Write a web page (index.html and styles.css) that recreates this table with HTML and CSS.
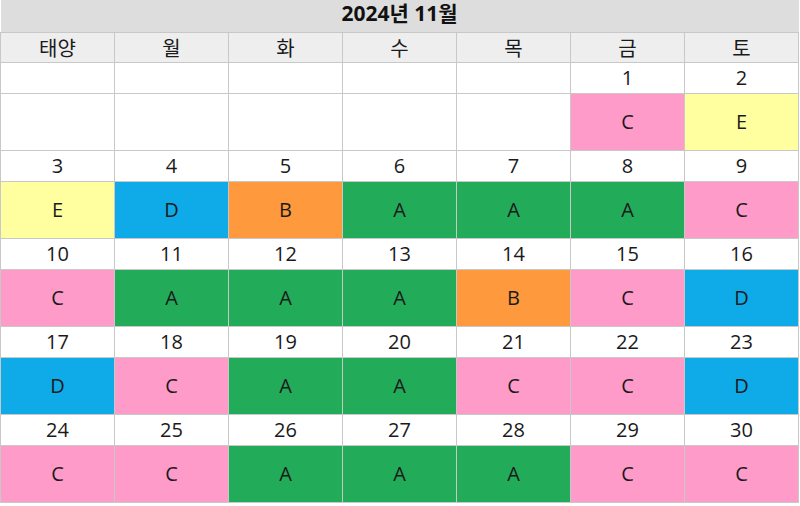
FILE: index.html
```html
<!DOCTYPE html>
<html>

<head>
    <meta charset="utf-8">
    <title>2024년 11월</title>
    <link rel="stylesheet" href="styles.css">
</head>

<body>

    <table class="calendar">
        <tr>
            <th colspan="7" class="title">2024년 11월</th>
        </tr>
        <tr class="week">
            <th>태양</th>
            <th>월</th>
            <th>화</th>
            <th>수</th>
            <th>목</th>
            <th>금</th>
            <th>토</th>
        </tr>

        <tr class="date">
            <td></td><td></td><td></td><td></td><td></td><td>1</td><td>2</td>
        </tr>
        <tr class="shift">
            <td></td><td></td><td></td><td></td><td></td>
            <td class="c">C</td><td class="e">E</td>
        </tr>

        <tr class="date">
            <td>3</td><td>4</td><td>5</td><td>6</td><td>7</td><td>8</td><td>9</td>
        </tr>
        <tr class="shift">
            <td class="e">E</td><td class="d">D</td><td class="b">B</td><td class="a">A</td>
            <td class="a">A</td><td class="a">A</td><td class="c">C</td>
        </tr>

        <tr class="date">
            <td>10</td><td>11</td><td>12</td><td>13</td><td>14</td><td>15</td><td>16</td>
        </tr>
        <tr class="shift">
            <td class="c">C</td><td class="a">A</td><td class="a">A</td><td class="a">A</td>
            <td class="b">B</td><td class="c">C</td><td class="d">D</td>
        </tr>

        <tr class="date">
            <td>17</td><td>18</td><td>19</td><td>20</td><td>21</td><td>22</td><td>23</td>
        </tr>
        <tr class="shift">
            <td class="d">D</td><td class="c">C</td><td class="a">A</td><td class="a">A</td>
            <td class="c">C</td><td class="c">C</td><td class="d">D</td>
        </tr>

        <tr class="date">
            <td>24</td><td>25</td><td>26</td><td>27</td><td>28</td><td>29</td><td>30</td>
        </tr>
        <tr class="shift">
            <td class="c">C</td><td class="c">C</td><td class="a">A</td><td class="a">A</td>
            <td class="a">A</td><td class="c">C</td><td class="c">C</td>
        </tr>
    </table>

</body>

</html>
```

FILE: styles.css
```css
* {
    margin: 0px;
    padding: 0px;
}

body {
    background: #ffffff;
    font-family: "Open Sans", "Noto Sans CJK KR", sans-serif;
    color: #1a1a1a;
}

.calendar {
    width: 799px;
    table-layout: fixed;
    border-collapse: collapse;
}

.calendar td,
.calendar th {
    border: 1px solid #c8c8c8;
    text-align: center;
    padding: 0px;
}

.calendar th.title {
    height: 32px;
    background: #dddddd;
    border: none;
    border-bottom: 1px solid #c8c8c8;
    font-size: 21px;
    font-weight: bold;
    line-height: 26px;
    vertical-align: top;
    color: #111111;
}

.week th {
    height: 29px;
    background: #eeeeee;
    font-family: "Noto Sans CJK KR", sans-serif;
    font-size: 20px;
    font-weight: normal;
    line-height: 26px;
}

.date td {
    height: 30px;
    font-size: 20px;
    line-height: 26px;
}

.shift td {
    height: 56px;
    font-size: 20px;
    line-height: 26px;
}

.a {
    background: #22ac5a;
}

.b {
    background: #fe9a3d;
}

.c {
    background: #ff9bc8;
}

.d {
    background: #0fabe9;
}

.e {
    background: #ffffa0;
}
```
